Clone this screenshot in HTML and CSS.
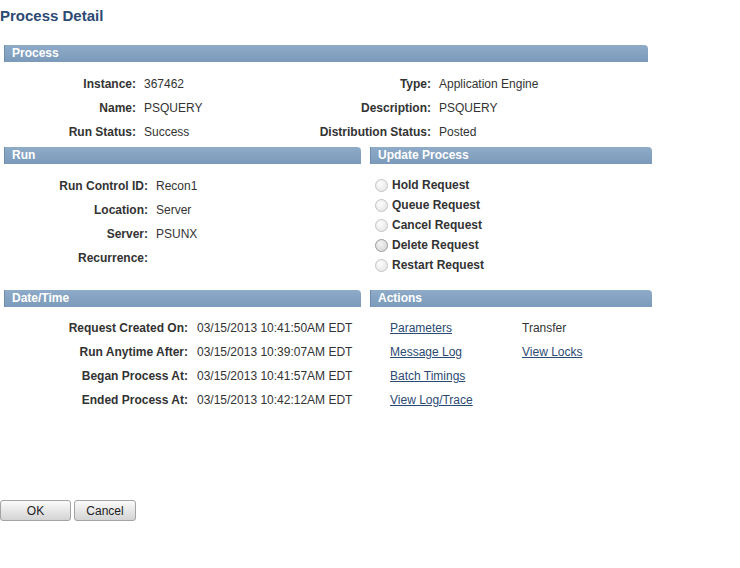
FILE: index.html
```html
<!DOCTYPE html>
<html lang="en">
<head>
    <meta charset="UTF-8">
    <title>Process Detail</title>
    <link rel="stylesheet" href="styles.css">
</head>
<body>
    <h1 class="page-title">Process Detail</h1>

    <div class="section process">
        <div class="bar">Process</div>
        <div class="fields">
            <div class="row">
                <span class="lbl w132">Instance:</span><span class="val w140">367462</span>
                <span class="lbl w147">Type:</span><span class="val">Application Engine</span>
            </div>
            <div class="row">
                <span class="lbl w132">Name:</span><span class="val w140">PSQUERY</span>
                <span class="lbl w147">Description:</span><span class="val">PSQUERY</span>
            </div>
            <div class="row">
                <span class="lbl w132">Run Status:</span><span class="val w140">Success</span>
                <span class="lbl w147">Distribution Status:</span><span class="val">Posted</span>
            </div>
        </div>
    </div>

    <div class="grid">
        <div class="section">
            <div class="bar">Run</div>
            <div class="fields">
                <div class="row"><span class="lbl w144">Run Control ID:</span><span class="val">Recon1</span></div>
                <div class="row"><span class="lbl w144">Location:</span><span class="val">Server</span></div>
                <div class="row"><span class="lbl w144">Server:</span><span class="val">PSUNX</span></div>
                <div class="row"><span class="lbl w144">Recurrence:</span><span class="val"></span></div>
            </div>
        </div>
        <div class="section">
            <div class="bar">Update Process</div>
            <div class="radios">
                <label class="radio"><span class="dot"></span>Hold Request</label>
                <label class="radio"><span class="dot"></span>Queue Request</label>
                <label class="radio"><span class="dot"></span>Cancel Request</label>
                <label class="radio"><span class="dot dark"></span>Delete Request</label>
                <label class="radio"><span class="dot"></span>Restart Request</label>
            </div>
        </div>

        <div class="section">
            <div class="bar">Date/Time</div>
            <div class="fields dates">
                <div class="row"><span class="lbl w184">Request Created On:</span><span class="val">03/15/2013 10:41:50AM EDT</span></div>
                <div class="row"><span class="lbl w184">Run Anytime After:</span><span class="val">03/15/2013 10:39:07AM EDT</span></div>
                <div class="row"><span class="lbl w184">Began Process At:</span><span class="val">03/15/2013 10:41:57AM EDT</span></div>
                <div class="row"><span class="lbl w184">Ended Process At:</span><span class="val">03/15/2013 10:42:12AM EDT</span></div>
            </div>
        </div>
        <div class="section">
            <div class="bar">Actions</div>
            <div class="actions">
                <a href="#">Parameters</a><span>Transfer</span>
                <a href="#">Message Log</a><a href="#">View Locks</a>
                <a href="#">Batch Timings</a><span></span>
                <a href="#">View Log/Trace</a><span></span>
            </div>
        </div>
    </div>

    <div class="buttons">
        <button class="btn ok">OK</button>
        <button class="btn cancel">Cancel</button>
    </div>
</body>
</html>
```

FILE: styles.css
```css
body {
    margin: 0;
    padding-top: 6px;
    background: #fff;
    color: #333;
    font-family: "Liberation Sans", Arial, sans-serif;
    font-size: 12px;
}
.page-title {
    margin: 0;
    font-size: 15px;
    line-height: 20px;
    color: #2c4a73;
}
.process {
    width: 644px;
    margin-top: 19px;
    margin-bottom: 3px;
    margin-left: 4px;
}
.bar {
    height: 17px;
    line-height: 17px;
    padding-left: 7px;
    color: #fff;
    font-weight: bold;
    background: linear-gradient(#8eabc8, #7b9aba);
    border-left: 1px solid #6d8caf;
    border-top-right-radius: 4px;
}
.fields {
    padding-top: 10px;
}
.dates {
    padding-top: 9px;
}
.row {
    display: flex;
    height: 24px;
    line-height: 24px;
}
.lbl {
    font-weight: bold;
    text-align: right;
    margin-right: 8px;
    white-space: nowrap;
}
.val {
    color: #333;
    white-space: nowrap;
}
.w132 { width: 132px; }
.w144 { width: 144px; }
.w147 { width: 147px; }
.w184 { width: 184px; margin-right: 9px; }
.w140 { width: 140px; }

.grid {
    display: grid;
    grid-template-columns: 357px 282px;
    column-gap: 9px;
    row-gap: 15px;
    margin-left: 4px;
}
.radios {
    padding-top: 11px;
    padding-left: 5px;
}
.radio {
    display: flex;
    align-items: center;
    height: 20px;
    font-weight: bold;
}
.dot {
    width: 11px;
    height: 11px;
    border-radius: 50%;
    border: 1px solid #c4c4c4;
    background: radial-gradient(circle at 40% 35%, #fdfdfd, #e0e0e0);
    margin-right: 4px;
}
.dot.dark {
    border-color: #9a9a9a;
    background: radial-gradient(circle at 40% 35%, #f4f4f4, #cfcfcf);
}
.actions {
    display: grid;
    grid-template-columns: 132px 130px;
    grid-auto-rows: 24px;
    line-height: 24px;
    padding-top: 9px;
    padding-left: 20px;
}
.actions a {
    color: #2c4a73;
    text-decoration: underline;
    justify-self: start;
}
.actions span {
    color: #333;
}
.buttons {
    display: flex;
    gap: 3px;
    margin-top: 88px;
}
.btn {
    height: 21px;
    padding: 0;
    border: 1px solid #a4a4a4;
    border-radius: 3px;
    background: linear-gradient(#fbfbfb, #e3e3e3 60%, #d4d4d4);
    color: #222;
    font-family: "Liberation Sans", Arial, sans-serif;
    font-size: 12px;
    cursor: pointer;
}
.ok { width: 71px; }
.cancel { width: 62px; }
```
